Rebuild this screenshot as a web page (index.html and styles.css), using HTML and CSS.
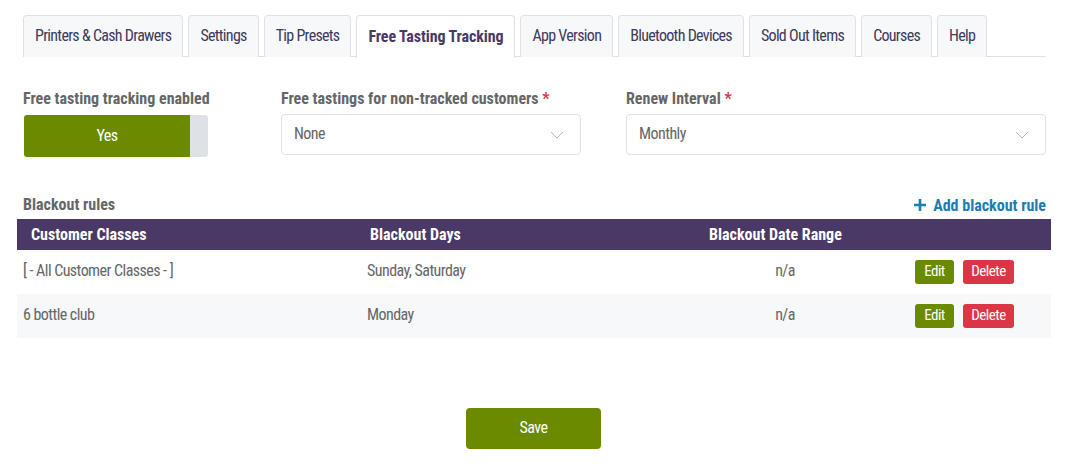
FILE: index.html
```html
<!DOCTYPE html>
<html>
<head>
<meta charset="utf-8">
<link rel="stylesheet" href="styles.css">
</head>
<body>
<div class="page">
  <div class="tabs">
    <div class="tab">Printers &amp; Cash Drawers</div>
    <div class="tab">Settings</div>
    <div class="tab">Tip Presets</div>
    <div class="tab active">Free Tasting Tracking</div>
    <div class="tab">App Version</div>
    <div class="tab">Bluetooth Devices</div>
    <div class="tab">Sold Out Items</div>
    <div class="tab">Courses</div>
    <div class="tab">Help</div>
  </div>

  <div class="form-row">
    <div class="field f-toggle">
      <div class="label">Free tasting tracking enabled</div>
      <div class="toggle"><div class="toggle-on">Yes</div><div class="toggle-off"></div></div>
    </div>
    <div class="field f-sel1">
      <div class="label">Free tastings for non-tracked customers <span class="req">*</span></div>
      <div class="select"><span>None</span>
        <svg class="chev" width="14" height="8" viewBox="0 0 14 8"><path d="M1 1 L7 7 L13 1" fill="none" stroke="#b8b8b8" stroke-width="1"/></svg>
      </div>
    </div>
    <div class="field f-sel2">
      <div class="label">Renew Interval <span class="req">*</span></div>
      <div class="select"><span>Monthly</span>
        <svg class="chev" width="14" height="8" viewBox="0 0 14 8"><path d="M1 1 L7 7 L13 1" fill="none" stroke="#b8b8b8" stroke-width="1"/></svg>
      </div>
    </div>
  </div>

  <div class="section-head">
    <div class="label">Blackout rules</div>
    <div class="add-link"><svg width="14" height="14" viewBox="0 0 14 14"><path d="M7 1 V13 M1 7 H13" stroke="#1a7db5" stroke-width="2.6"/></svg>Add blackout rule</div>
  </div>

  <div class="table">
    <div class="thead">
      <div class="th c1">Customer Classes</div>
      <div class="th c2">Blackout Days</div>
      <div class="th c3">Blackout Date Range</div>
      <div class="th c4"></div>
    </div>
    <div class="tr">
      <div class="td c1">[ - All Customer Classes - ]</div>
      <div class="td c2">Sunday, Saturday</div>
      <div class="td c3">n/a</div>
      <div class="td c4"><span class="btn-sm edit">Edit</span><span class="btn-sm del">Delete</span></div>
    </div>
    <div class="tr alt">
      <div class="td c1">6 bottle club</div>
      <div class="td c2">Monday</div>
      <div class="td c3">n/a</div>
      <div class="td c4"><span class="btn-sm edit">Edit</span><span class="btn-sm del">Delete</span></div>
    </div>
  </div>

  <div class="save-row"><div class="save">Save</div></div>
</div>
</body>
</html>
```

FILE: styles.css
```css
* { box-sizing: border-box; }
body {
  margin: 0;
  background: #fff;
  font-family: "Roboto Condensed", Roboto, "Liberation Sans", sans-serif;
  font-size: 16px;
  color: #666;
  letter-spacing: -0.55px;
}
.page { padding: 15px 22px 0 23px; }

.tabs {
  display: flex;
  gap: 5px;
  border-bottom: 1px solid #dee2e6;
  height: 42px;
}
.tab {
  height: 42px;
  padding: 0 11px 2px 11px;
  display: flex;
  align-items: center;
  background: #f7f8fa;
  border: 1px solid #dee2e6;
  border-bottom: none;
  border-radius: 4px 4px 0 0;
  color: #3d3a5a;
  font-size: 16px;
  letter-spacing: -0.7px;
  white-space: nowrap;
}
.tab.active {
  background: #fff;
  font-weight: bold;
  color: #4a3866;
  height: 43px;
  letter-spacing: -0.1px;
}

.form-row {
  display: flex;
  margin-top: 32px;
}
.label {
  font-weight: bold;
  color: #666;
  font-size: 16px;
  line-height: 20px;
  letter-spacing: 0;
  white-space: nowrap;
}
.req { color: #dc3545; }
.f-toggle { width: 258px; }
.f-sel1 { width: 300px; margin-right: 45px; }
.f-sel2 { flex: 1; }
.toggle {
  margin-top: 6px;
  width: 184px;
  height: 42px;
  display: flex;
  border-radius: 3px;
  overflow: hidden;
  margin-left: 1px;
}
.toggle-on {
  width: 166px;
  background: #6a8a00;
  color: #fff;
  display: flex;
  align-items: center;
  justify-content: center;
  padding-bottom: 2px;
}
.toggle-off { flex: 1; background: #dee2e6; }
.select {
  margin-top: 5px;
  height: 41px;
  border: 1px solid #dee2e6;
  border-radius: 4px;
  display: flex;
  align-items: center;
  justify-content: space-between;
  padding: 0 16px 3px 12px;
  color: #666;
}
.chev { margin-top: 3px; }

.section-head {
  margin-top: 38px;
  display: flex;
  justify-content: space-between;
  align-items: center;
}
.add-link {
  color: #1a7db5;
  font-weight: bold;
  display: flex;
  align-items: center;
  gap: 6px;
  letter-spacing: 0;
}

.table { margin: 4px -5px 0 -6px; }
.thead {
  display: flex;
  background: #4a3866;
  height: 31px;
  align-items: center;
  padding-bottom: 1px;
}
.th { color: #fff; font-weight: bold; letter-spacing: 0; }
.c1 { width: 343px; }
.c2 { width: 340px; }
.c3 { width: 170px; }
.c4 { flex: 1; }
.th.c1 { padding-left: 14px; }
.th.c2 { padding-left: 10px; }
.th.c3 { padding-left: 9px; }
.tr {
  display: flex;
  align-items: center;
  height: 44px;
  background: #fff;
}
.tr.alt { background: #f7f8fa; }
.td { color: #666; padding-bottom: 3px; }
.td.c1 { padding-left: 6px; }
.td.c2 { padding-left: 7px; }
.td.c3 { text-align: center; }
.td.c4 { display: flex; gap: 9px; padding-left: 45px; padding-bottom: 1px; }
.btn-sm {
  height: 24px;
  display: inline-flex;
  align-items: center;
  justify-content: center;
  color: #fff;
  font-size: 15px;
  letter-spacing: -0.5px;
  border-radius: 3px;
  padding-bottom: 1px;
}
.edit { background: #6a8a00; width: 39px; }
.del { background: #dc3545; width: 51px; }

.save-row {
  display: flex;
  justify-content: center;
  margin-top: 70px;
}
.save {
  width: 135px;
  height: 41px;
  background: #6a8a00;
  color: #fff;
  border-radius: 4px;
  display: flex;
  align-items: center;
  justify-content: center;
  padding-bottom: 2px;
  margin-left: -2px;
}
```
